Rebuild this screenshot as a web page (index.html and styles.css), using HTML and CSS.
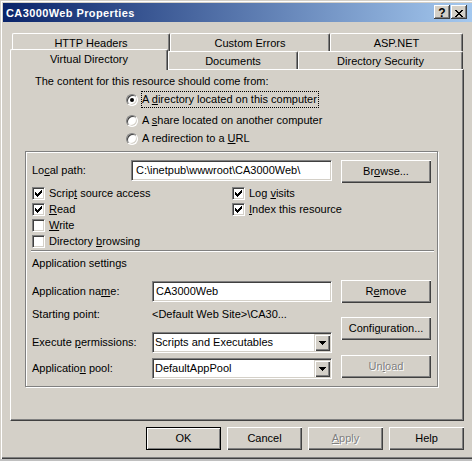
FILE: index.html
```html
<!DOCTYPE html>
<html>
<head>
<meta charset="utf-8">
<title>CA3000Web Properties</title>
<link rel="stylesheet" href="styles.css">
</head>
<body>
<div class="window">
  <div class="titlebar">
    <span class="title">CA3000Web Properties</span>
    <div class="cbtns">
      <span class="cbtn help">?</span>
      <span class="cbtn close"><svg width="8" height="7" viewBox="0 0 8 7" shape-rendering="crispEdges"><path d="M0 0h2v1H0z M6 0h2v1H6z M1 1h2v1H1z M5 1h2v1H5z M2 2h4v1H2z M3 3h2v1H3z M2 4h4v1H2z M1 5h2v1H1z M5 5h2v1H5z M0 6h2v1H0z M6 6h2v1H6z" fill="#000"/></svg></span>
    </div>
  </div>
  <div class="client">
    <div class="tabs">
      <div class="tabrow back">
        <div class="tab t-hh">HTTP Headers</div>
        <div class="tab t-ce">Custom Errors</div>
        <div class="tab t-asp">ASP.NET</div>
      </div>
      <div class="tabrow front">
        <div class="tab sel t-vd">Virtual Directory</div>
        <div class="tab t-doc">Documents</div>
        <div class="tab t-ds">Directory Security</div>
      </div>
    </div>
    <div class="panel">
      <div class="intro">The content for this resource should come from:</div>
      <div class="radios">
        <div class="radio-row r1"><span class="radio on"></span><span class="rlabel focus">A <u>d</u>irectory located on this computer</span></div>
        <div class="radio-row r2"><span class="radio"></span><span class="rlabel">A <u>s</u>hare located on another computer</span></div>
        <div class="radio-row r3"><span class="radio"></span><span class="rlabel">A redirection to a <u>U</u>RL</span></div>
      </div>
      <div class="group">
        <div class="row-local">
          <span class="lbl-local">Lo<u>c</u>al path:</span>
          <div class="textbox tb-local">C:\inetpub\wwwroot\CA3000Web\</div>
          <div class="btn btn-browse">Br<u>o</u>wse...</div>
        </div>
        <div class="checks">
          <div class="chk"><span class="cbox"><svg width="13" height="13" viewBox="0 0 13 13" shape-rendering="crispEdges"><path d="M3 5h1v3H3z M4 6h1v3H4z M5 7h1v3H5z M6 6h1v3H6z M7 5h1v3H7z M8 4h1v3H8z M9 3h1v3H9z" fill="#000"/></svg></span><span>Scrip<u>t</u> source access</span></div>
          <div class="chk"><span class="cbox"><svg width="13" height="13" viewBox="0 0 13 13" shape-rendering="crispEdges"><path d="M3 5h1v3H3z M4 6h1v3H4z M5 7h1v3H5z M6 6h1v3H6z M7 5h1v3H7z M8 4h1v3H8z M9 3h1v3H9z" fill="#000"/></svg></span><span>Log <u>v</u>isits</span></div>
          <div class="chk"><span class="cbox"><svg width="13" height="13" viewBox="0 0 13 13" shape-rendering="crispEdges"><path d="M3 5h1v3H3z M4 6h1v3H4z M5 7h1v3H5z M6 6h1v3H6z M7 5h1v3H7z M8 4h1v3H8z M9 3h1v3H9z" fill="#000"/></svg></span><span><u>R</u>ead</span></div>
          <div class="chk"><span class="cbox"><svg width="13" height="13" viewBox="0 0 13 13" shape-rendering="crispEdges"><path d="M3 5h1v3H3z M4 6h1v3H4z M5 7h1v3H5z M6 6h1v3H6z M7 5h1v3H7z M8 4h1v3H8z M9 3h1v3H9z" fill="#000"/></svg></span><span><u>I</u>ndex this resource</span></div>
          <div class="chk"><span class="cbox"></span><span><u>W</u>rite</span></div>
          <div class="chk"></div>
          <div class="chk"><span class="cbox"></span><span>Directory <u>b</u>rowsing</span></div>
          <div class="chk"></div>
        </div>
        <div class="sep"></div>
        <div class="appset">Application settings</div>
        <div class="lower">
          <div class="lcol">
            <div class="frow f-name"><span class="flabel">Application na<u>m</u>e:</span><div class="textbox tb-name">CA3000Web</div></div>
            <div class="frow f-start"><span class="flabel">Starting point:</span><span class="fval">&lt;Default Web Site&gt;\CA30...</span></div>
            <div class="frow f-exec"><span class="flabel">Execute <u>p</u>ermissions:</span>
              <div class="combo"><span class="cval">Scripts and Executables</span><span class="cdrop"><svg width="7" height="4" viewBox="0 0 7 4" shape-rendering="crispEdges"><path d="M0 0h7v1H0z M1 1h5v1H1z M2 2h3v1H2z M3 3h1v1H3z" fill="#000"/></svg></span></div>
            </div>
            <div class="frow f-pool"><span class="flabel">Applicatio<u>n</u> pool:</span>
              <div class="combo"><span class="cval">DefaultAppPool</span><span class="cdrop"><svg width="7" height="4" viewBox="0 0 7 4" shape-rendering="crispEdges"><path d="M0 0h7v1H0z M1 1h5v1H1z M2 2h3v1H2z M3 3h1v1H3z" fill="#000"/></svg></span></div>
            </div>
          </div>
          <div class="rcol">
            <div class="btn">R<u>e</u>move</div>
            <div class="btn b-conf">Confi<u>g</u>uration...</div>
            <div class="btn b-unload dis">Un<u>l</u>oad</div>
          </div>
        </div>
      </div>
    </div>
    <div class="dlg-buttons">
      <div class="btn dbtn def">OK</div>
      <div class="btn dbtn">Cancel</div>
      <div class="btn dbtn dis"><u>A</u>pply</div>
      <div class="btn dbtn">Help</div>
    </div>
  </div>
</div>
</body>
</html>
```
FILE: styles.css
```css
* { box-sizing: border-box; }
html, body { margin: 0; padding: 0; }
body {
  width: 472px;
  height: 461px;
  overflow: hidden;
  background: #c0c0c0;
  font-family: "Liberation Sans", Arial, sans-serif;
  font-size: 11px;
  color: #000;
}
u { text-decoration: underline; text-underline-offset: 1px; }

.window {
  width: 480px;
  height: 459px;
  background: #d4d0c8;
  padding: 3px;
  box-shadow: inset 1px 1px 0 #d4d0c8, inset 2px 2px 0 #fff, inset -1px -1px 0 #404040, inset -2px -2px 0 #808080;
}

.titlebar {
  height: 19px;
  display: flex;
  align-items: flex-start;
  background: linear-gradient(to right, #0a246a, #a6caf0);
  padding-right: 10px;
}
.title {
  flex: 1;
  color: #fff;
  font-weight: bold;
  font-size: 11px;
  letter-spacing: 0.4px;
  line-height: 20px;
  padding-left: 3px;
  white-space: nowrap;
}
.cbtns { display: flex; gap: 1px; margin-top: 2px; }
.cbtn {
  width: 16px;
  height: 14px;
  background: #d4d0c8;
  box-shadow: inset -1px -1px 0 #404040, inset 1px 1px 0 #fff, inset -2px -2px 0 #808080;
}
.help {
  font-weight: bold;
  font-size: 12px;
  line-height: 12px;
  padding-top: 2px;
  text-align: center;
}
.close { display: flex; align-items: flex-start; }
.close svg { display: block; margin: 5px 0 0 4px; }

.client { padding: 11px 0 0 7px; }

.tabs { width: 454px; height: 36px; }
.tabrow { display: flex; height: 18px; }
.tabrow.back { padding-left: 2px; }
.tab {
  height: 18px;
  background: #d4d0c8;
  border-top: 1px solid #fff;
  border-left: 1px solid #fff;
  border-right: 1px solid #404040;
  box-shadow: inset -1px 0 0 #808080;
  border-radius: 2px 2px 0 0;
  text-align: center;
  line-height: 16px;
  padding-top: 1px;
  white-space: nowrap;
}
.t-hh { width: 158px; }
.t-ce { width: 160px; }
.t-asp { width: 133px; }
.t-vd { width: 158px; }
.t-doc { width: 130px; }
.t-ds { width: 165px; }
.tab.sel {
  height: 21px;
  margin-top: -2px;
  position: relative;
  z-index: 1;
}

.panel {
  width: 454px;
  height: 352px;
  border: 1px solid;
  border-color: #fff #404040 #404040 #fff;
  box-shadow: inset -1px -1px 0 #808080;
}
.intro { margin: 5px 0 0 24px; line-height: 13px; }
.radios { margin: 3px 0 0 115px; }
.radio-row { display: flex; align-items: center; height: 17px; }
.r2 { margin-top: 4px; }
.r3 { margin-top: 1px; }
.radio {
  width: 12px;
  height: 12px;
  border-radius: 50%;
  background: #fff;
  border: 1px solid;
  border-color: #808080 #fff #fff #808080;
  box-shadow: inset 1px 1px 0 #404040, inset -1px -1px 0 #d4d0c8;
  margin-right: 3px;
  display: flex;
  align-items: center;
  justify-content: center;
}
.radio.on::after {
  content: "";
  width: 4px;
  height: 4px;
  border-radius: 50%;
  background: #000;
}
.rlabel {
  border: 1px dotted transparent;
  line-height: 15px;
  padding-right: 1px;
  white-space: nowrap;
}
.rlabel.focus { border-color: #000; }

.group {
  margin: 4px 0 0 14px;
  width: 413px;
  height: 236px;
  border: 1px solid #808080;
  box-shadow: inset 1px 1px 0 #fff, 1px 1px 0 #fff;
  padding: 8px 0 0 6px;
}
.row-local { display: flex; align-items: flex-start; height: 23px; }
.lbl-local { width: 99px; line-height: 21px; }
.textbox {
  height: 21px;
  background: #fff;
  border: 1px solid;
  border-color: #808080 #fff #fff #808080;
  box-shadow: inset 1px 1px 0 #404040, inset -1px -1px 0 #d4d0c8;
  line-height: 19px;
  white-space: nowrap;
  overflow: hidden;
}
.tb-local { width: 201px; padding-left: 4px; }
.btn {
  width: 90px;
  height: 23px;
  background: #d4d0c8;
  box-shadow: inset 1px 1px 0 #fff, inset -1px -1px 0 #404040, inset -2px -2px 0 #808080;
  text-align: center;
  line-height: 23px;
  white-space: nowrap;
}
.btn-browse { margin-left: 9px; }
.dis { color: #808080; text-shadow: 1px 1px 0 #fff; }

.checks {
  display: grid;
  grid-template-columns: 200px auto;
  grid-auto-rows: 16px;
  margin-top: 2px;
}
.chk { display: flex; align-items: flex-start; line-height: 16px; white-space: nowrap; }
.cbox {
  width: 13px;
  height: 13px;
  margin: 2px 4px 0 0;
  background: #fff;
  border: 1px solid;
  border-color: #808080 #fff #fff #808080;
  box-shadow: inset 1px 1px 0 #404040, inset -1px -1px 0 #d4d0c8;
  flex: none;
}
.cbox svg { display: block; margin: -1px; }

.sep {
  margin: 1px 0 0 -1px;
  width: 403px;
  height: 2px;
  border-top: 1px solid #808080;
  border-bottom: 1px solid #fff;
}
.appset { margin-top: 5px; line-height: 13px; }

.lower { display: flex; margin-top: 10px; }
.lcol { width: 300px; }
.rcol { margin-left: 9px; width: 90px; }
.frow { display: flex; align-items: flex-start; height: 23px; }
.flabel { width: 120px; line-height: 23px; white-space: nowrap; }
.fval { line-height: 23px; white-space: nowrap; }
.tb-name { width: 180px; margin-top: 1px; padding-left: 3px; }
.f-exec { margin-top: 6px; height: 21px; }
.f-pool { margin-top: 5px; height: 21px; }
.f-exec .flabel, .f-pool .flabel { line-height: 21px; }
.combo {
  width: 180px;
  height: 21px;
  display: flex;
  background: #fff;
  border: 1px solid;
  border-color: #808080 #fff #fff #808080;
  box-shadow: inset 1px 1px 0 #404040, inset -1px -1px 0 #d4d0c8;
  padding: 1px;
}
.cval { flex: 1; padding-left: 1px; line-height: 17px; white-space: nowrap; overflow: hidden; }
.cdrop {
  width: 16px;
  height: 17px;
  background: #d4d0c8;
  box-shadow: inset 1px 1px 0 #d4d0c8, inset 2px 2px 0 #fff, inset -1px -1px 0 #404040, inset -2px -2px 0 #808080;
  display: flex;
  align-items: center;
  justify-content: center;
}
.cdrop svg { display: block; }
.b-conf { margin-top: 14px; }
.b-unload { margin-top: 15px; }

.dlg-buttons {
  display: flex;
  justify-content: flex-end;
  gap: 6px;
  width: 454px;
  margin-top: 6px;
}
.dbtn { width: 75px; }
.btn.def {
  border: 1px solid #000;
  box-shadow: inset 1px 1px 0 #fff, inset -1px -1px 0 #808080;
  line-height: 21px;
}
```
